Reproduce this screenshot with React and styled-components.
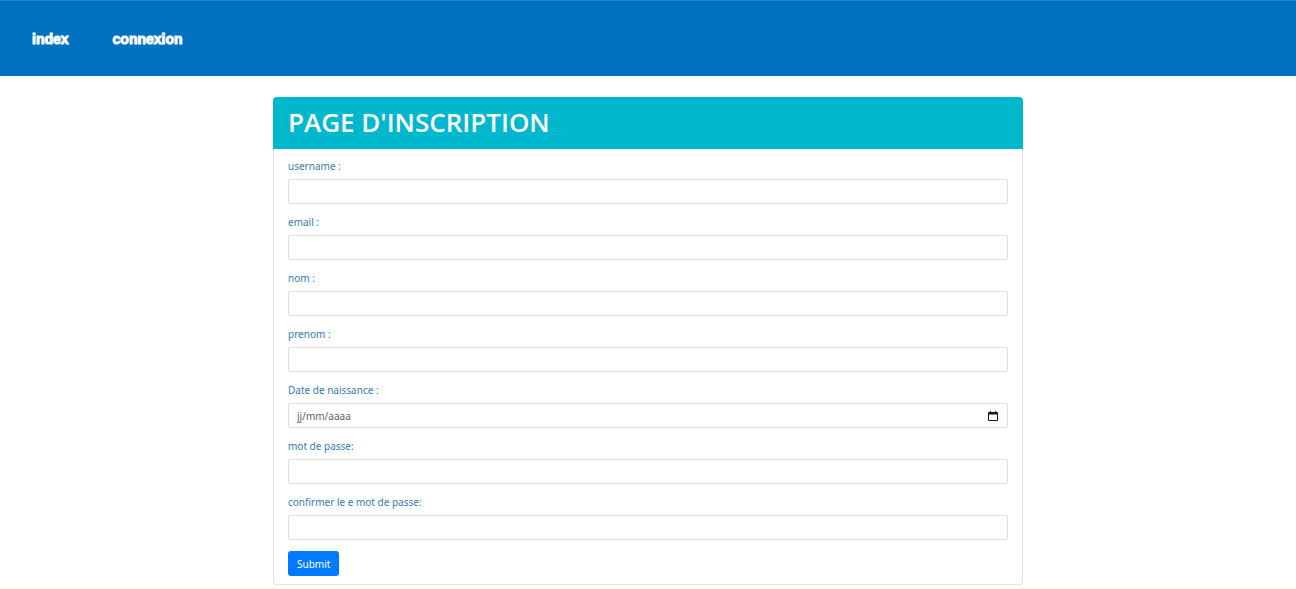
import React from "react";
import styled, { createGlobalStyle } from "styled-components";

const GlobalStyle = createGlobalStyle`
  *, *::before, *::after { box-sizing: border-box; }
  body {
    margin: 0;
    background: #fff;
    color: #337ab7;
    font-family: "Segoe UI", "Noto Sans", "Open Sans", sans-serif;
    font-size: 10px;
    line-height: 18px;
  }
`;

const Page = styled.div`
  border-bottom: 1px solid #fdf6ea;
  padding-bottom: 3px;
`;

const NavBar = styled.nav`
  display: flex;
  align-items: center;
  gap: 44px;
  height: 76px;
  padding: 0 32px;
  background: #0070c0;
  border-top: 1px solid #2383cb;
`;

const NavLink = styled.a`
  color: #fff;
  font-family: Impact, "Liberation Sans Narrow", "Liberation Sans", sans-serif;
  font-size: 14px;
  font-weight: 700;
  line-height: 24px;
  text-decoration: none;
  -webkit-text-stroke: 1px #fff;
`;

const Card = styled.main`
  max-width: 750px;
  margin: 21px auto 0;
  border: 1px solid #e4e4e4;
  border-top: 0;
  border-radius: 4px;
`;

const CardHeader = styled.header`
  margin: 0 -1px;
  padding: 7px 15px 9px;
  background: #00b8ce;
  border-radius: 4px 4px 0 0;
`;

const Title = styled.h1`
  margin: 0;
  color: #fff;
  font-family: "Segoe UI", "Open Sans", "Noto Sans", sans-serif;
  font-size: 26px;
  font-weight: 600;
  line-height: 36px;
`;

const Form = styled.form`
  padding: 8px 14px;
`;

const Field = styled.div`
  margin-bottom: 9px;
`;

const Label = styled.label`
  display: block;
  margin-bottom: 4px;
`;

const Control = styled.div`
  position: relative;
`;

const Input = styled.input`
  display: block;
  width: 100%;
  height: 25px;
  padding: 0 8px;
  border: 1px solid #dcdfe2;
  border-radius: 2px;
  background: #fff;
  color: #495057;
  font: inherit;

  &::placeholder { color: #5b6066; opacity: 1; }
`;

const PickerButton = styled.button`
  position: absolute;
  top: 0;
  right: 8px;
  display: flex;
  align-items: center;
  height: 100%;
  padding: 0 2px;
  border: 0;
  background: none;
  color: #111;
`;

const SubmitButton = styled.button`
  display: block;
  height: 25px;
  margin-top: 11px;
  padding: 0 9px;
  border: 0;
  border-radius: 3px;
  background: #007bff;
  color: #fff;
  font: inherit;
`;

const fields = [
  { id: "username", label: "username :" },
  { id: "email", label: "email :", type: "email" },
  { id: "nom", label: "nom :" },
  { id: "prenom", label: "prenom :" },
  { id: "naissance", label: "Date de naissance :", date: true },
  { id: "password", label: "mot de passe:", type: "password" },
  { id: "confirm", label: "confirmer le e mot de passe:", type: "password" },
];

function CalendarIcon() {
  return (
    <svg width="10" height="10" viewBox="0 0 10 10" aria-hidden="true">
      <path
        fill="currentColor"
        fillRule="evenodd"
        d="M2 0h1v1h4V0h1v1h1q1 0 1 1v7q0 1-1 1H1Q0 10 0 9V2q0-1 1-1h1zM1 3.5V9h8V3.5z"
      />
    </svg>
  );
}

export default function App() {
  return (
    <Page>
      <GlobalStyle />
      <NavBar>
        <NavLink href="#index">index</NavLink>
        <NavLink href="#connexion">connexion</NavLink>
      </NavBar>
      <Card>
        <CardHeader>
          <Title>PAGE D'INSCRIPTION</Title>
        </CardHeader>
        <Form onSubmit={(e) => e.preventDefault()}>
          {fields.map(({ id, label, type = "text", date }) => (
            <Field key={id}>
              <Label htmlFor={id}>{label}</Label>
              <Control>
                <Input id={id} name={id} type={type} placeholder={date ? "jj/mm/aaaa" : undefined} />
                {date && (
                  <PickerButton type="button" aria-label="Choisir une date">
                    <CalendarIcon />
                  </PickerButton>
                )}
              </Control>
            </Field>
          ))}
          <SubmitButton type="submit">Submit</SubmitButton>
        </Form>
      </Card>
    </Page>
  );
}
